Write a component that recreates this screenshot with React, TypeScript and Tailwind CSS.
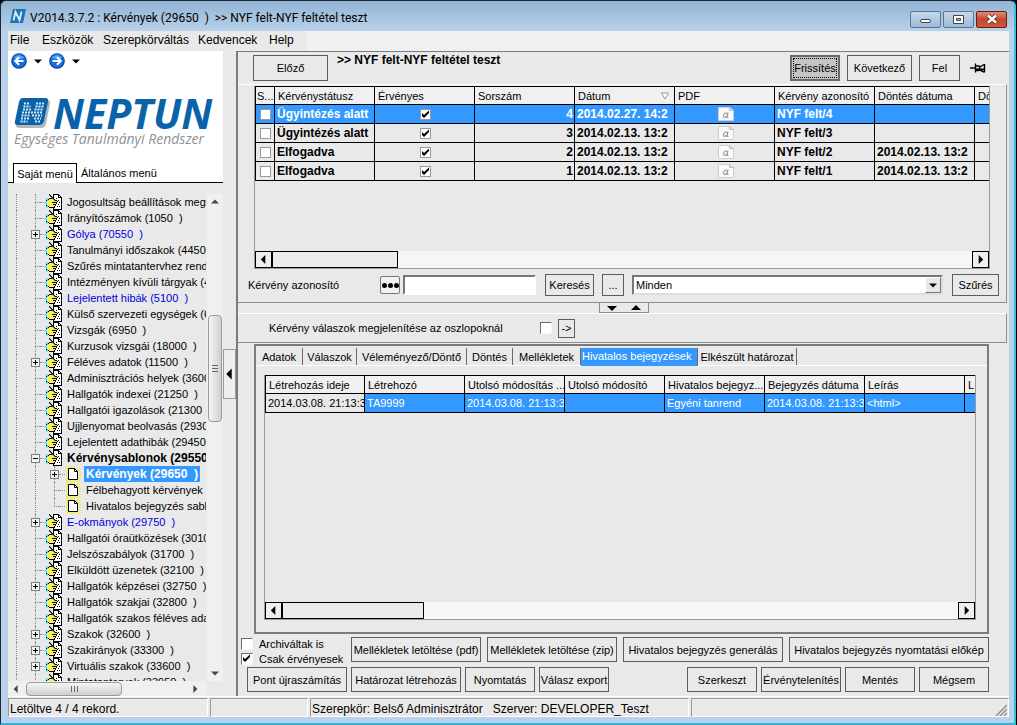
import React from "react";
import clsx from "clsx";

type TreeItem = {
  text: string;
  expand?: "+" | "-";
  link?: boolean;
  bold?: boolean;
  child?: boolean;
  selected?: boolean;
  last?: boolean;
};

const TREE: TreeItem[] = [
  { text: "Jogosultság beállítások megte" },
  { text: "Irányítószámok (1050  )" },
  { text: "Gólya (70550  )", expand: "+", link: true },
  { text: "Tanulmányi időszakok (4450" },
  { text: "Szűrés mintatantervhez rende" },
  { text: "Intézményen kívüli tárgyak (4" },
  { text: "Lejelentett hibák (5100  )", link: true },
  { text: "Külső szervezeti egységek (68" },
  { text: "Vizsgák (6950  )" },
  { text: "Kurzusok vizsgái (18000  )" },
  { text: "Féléves adatok (11500  )", expand: "+" },
  { text: "Adminisztrációs helyek (3600" },
  { text: "Hallgatók indexei (21250  )" },
  { text: "Hallgatói igazolások (21300  )" },
  { text: "Ujjlenyomat beolvasás (29300" },
  { text: "Lejelentett adathibák (29450" },
  { text: "Kérvénysablonok (29550", expand: "-", bold: true },
  { text: "Kérvények (29650  )", expand: "+", bold: true, child: true, selected: true },
  { text: "Félbehagyott kérvények (", child: true },
  { text: "Hivatalos bejegyzés sablo", child: true, last: true },
  { text: "E-okmányok (29750  )", expand: "+", link: true },
  { text: "Hallgatói óraütközések (3010" },
  { text: "Jelszószabályok (31700  )" },
  { text: "Elküldött üzenetek (32100  )" },
  { text: "Hallgatók képzései (32750  )", expand: "+" },
  { text: "Hallgatók szakjai (32800  )" },
  { text: "Hallgatók szakos féléves ada" },
  { text: "Szakok (32600  )", expand: "+" },
  { text: "Szakirányok (33300  )", expand: "+" },
  { text: "Virtuális szakok (33600  )", expand: "+" },
  { text: "Mintatantervek (33950  )" },
];

const REQUESTS = [
  { status: "Ügyintézés alatt", no: 4, date: "2014.02.27. 14:2", id: "NYF felt/4", decided: "" },
  { status: "Ügyintézés alatt", no: 3, date: "2014.02.13. 13:2", id: "NYF felt/3", decided: "" },
  { status: "Elfogadva", no: 2, date: "2014.02.13. 13:2", id: "NYF felt/2", decided: "2014.02.13. 13:2" },
  { status: "Elfogadva", no: 1, date: "2014.02.13. 13:2", id: "NYF felt/1", decided: "2014.02.13. 13:2" },
];

const TABS = [
  { label: "Adatok", width: "w-[47px]" },
  { label: "Válaszok", width: "w-[54px]" },
  { label: "Véleményező/Döntő", width: "w-[110px]" },
  { label: "Döntés", width: "w-[46px]" },
  { label: "Mellékletek", width: "w-[68px]" },
  { label: "Hivatalos bejegyzések", width: "w-[117px]", active: true },
  { label: "Elkészült határozat", width: "w-[99px]" },
];

// one character per pixel, "." is transparent
const HAND = [
  "...k...kkkkkk...",
  "...bk..kwwwwkk..",
  "....bk.kwwwwkwk.",
  ".....bkkwwwwkkkk",
  "c..kkkbkwwkwwwwk",
  "cckyyyybkwwwwwwk",
  "kcyyyyyybkkwkwwk",
  "c.yyyyyyyyykwwwk",
  "c.yyyykkkkkwwkwk",
  "c.yyyyyyyykwwwwk",
  "c.yyyyykkkwwkwwk",
  "kcyyyyyyykwwwwwk",
  "cckyyyyykwwkwkwk",
  "c..kkkkkkwwwwwwk",
  ".......kwwwwwwwk",
  ".......kkkkkkkkk",
];

const HAND_COLORS: Record<string, string> = {
  k: "#000",
  w: "#fff",
  y: "#f6f05a",
  c: "#3fd6d6",
  b: "#8a6a2c",
};

const Btn = ({ className, children }: { className?: string; children: React.ReactNode }) => (
  <button
    className={clsx(
      "shrink-0 overflow-hidden whitespace-nowrap border border-[#5c5c5c] bg-[#e9e9e9] text-center",
      className
    )}
  >
    {children}
  </button>
);

const Check = ({
  checked,
  sunken,
  label,
  id,
}: {
  checked?: boolean;
  sunken?: boolean;
  label?: string;
  id?: string;
}) => (
  <span className="inline-grid shrink-0 align-middle">
    <input
      id={id}
      type="checkbox"
      defaultChecked={checked}
      aria-label={label}
      className={clsx(
        "peer col-start-1 row-start-1 appearance-none border bg-white",
        sunken
          ? "size-3 border-[#f8f8f8] border-l-[#6e6e6e] border-t-[#6e6e6e]"
          : "size-[11px] border-[#9a9a9a]"
      )}
    />
    <svg
      viewBox="0 0 11 11"
      className="pointer-events-none invisible col-start-1 row-start-1 size-[11px] peer-checked:visible"
    >
      <path d="M2 4v3l2 2 5-5V1.500L4 6z" fill="#000" />
    </svg>
  </span>
);

const Arrow = ({ dir }: { dir: "left" | "right" | "up" | "down" }) => {
  const d = {
    left: "M7 0v10L2 5z",
    right: "M3 0v10l5-5z",
    up: "M0 7h10L5 2z",
    down: "M0 3h10L5 8z",
  }[dir];
  return (
    <svg viewBox="0 0 10 10" className="size-full">
      <path d={d} fill="#000" />
    </svg>
  );
};

const HandIcon = () => (
  <svg viewBox="0 0 16 16" className="h-4 w-4 shrink-0" shapeRendering="crispEdges">
    {HAND.map((line, y) =>
      line.split("").map((c, x) =>
        c === "." ? null : (
          <rect key={x + "-" + y} x={x} y={y} width="1" height="1" fill={HAND_COLORS[c]} />
        )
      )
    )}
  </svg>
);

const PageIcon = () => (
  <svg viewBox="0 0 16 16" className="h-4 w-4 shrink-0">
    <path
      d="M2 1h8l5 4v10H2z"
      fill="none"
      stroke="#f0ee60"
      strokeWidth="2"
      strokeDasharray="2 1"
    />
    <path d="M3.500 2.500h6l3 3v8h-9z" fill="#fff" stroke="#000" />
    <path d="M9.500 2.500v3h3" fill="none" stroke="#000" />
  </svg>
);

const Expander = ({ sign }: { sign?: "+" | "-" }) =>
  sign ? (
    <svg viewBox="0 0 9 9" className="z-10 size-[9px] shrink-0" shapeRendering="crispEdges">
      <rect x="0.500" y="0.500" width="8" height="8" fill="#f4f4f4" stroke="#808080" />
      <path d={sign === "+" ? "M2 4.500h5M4.500 2v5" : "M2 4.500h5"} stroke="#000" />
    </svg>
  ) : (
    <span className="ml-1 h-px w-[5px] shrink-0 border-t border-dotted border-[#8c8c8c]" />
  );

const TreeRow = ({ item }: { item: TreeItem }) => (
  <li className="flex h-4 items-center whitespace-pre">
    <span className="ml-2 h-4 w-px shrink-0 border-l border-dotted border-[#8c8c8c]" />
    <span className="flex h-4 w-[29px] shrink-0 items-center pl-[14px]">
      {item.child ? (
        <span className="ml-1 h-4 w-px border-l border-dotted border-[#8c8c8c]" />
      ) : (
        <>
          <span className="grid h-4 w-[9px] shrink-0 place-items-center">
            <span className="col-start-1 row-start-1 h-4 w-px border-l border-dotted border-[#8c8c8c]" />
            <span className="col-start-1 row-start-1 flex w-[9px]">
              <Expander sign={item.expand} />
            </span>
          </span>
          <span className="h-px w-[6px] border-t border-dotted border-[#8c8c8c]" />
        </>
      )}
    </span>
    {item.child ? (
      <>
        <span className="ml-1 grid h-4 w-[9px] shrink-0 place-items-center">
          <span
            className={clsx(
              "col-start-1 row-start-1 w-px self-start border-l border-dotted border-[#8c8c8c]",
              item.last ? "h-2" : "h-4"
            )}
          />
          <span className="col-start-1 row-start-1 flex w-[9px]">
            <Expander sign={item.expand} />
          </span>
        </span>
        <span className="h-px w-[6px] shrink-0 border-t border-dotted border-[#8c8c8c]" />
        <PageIcon />
        <a
          href="#"
          className={clsx(
            "ml-[3px] px-0.5 leading-4",
            item.selected && "bg-[#3399ff] text-xs leading-4 font-bold text-white"
          )}
        >
          {item.text}
        </a>
      </>
    ) : (
      <>
        <HandIcon />
        <a
          href="#"
          className={clsx(
            "ml-[5px] leading-4",
            item.link && "text-[#0000e0]",
            item.bold && "text-xs leading-4 font-bold"
          )}
        >
          {item.text}
        </a>
      </>
    )}
  </li>
);

const GridScroll = ({ thumb }: { thumb: string }) => (
  <div className="mt-auto flex h-[17px] shrink-0 bg-[#f6f6f6]">
    <button aria-label="Balra" className="w-[17px] border border-black bg-[#eee] p-[3px]">
      <Arrow dir="left" />
    </button>
    <div className={clsx("border border-black bg-[#ebebeb]", thumb)} />
    <button aria-label="Jobbra" className="ml-auto w-[17px] border border-black bg-[#eee] p-[3px]">
      <Arrow dir="right" />
    </button>
  </div>
);

const NavIcon = ({ flip }: { flip?: boolean }) => (
  <svg viewBox="0 0 16 16" className={clsx("size-4", flip && "-scale-x-100")}>
    <circle cx="8" cy="8" r="7.800" fill="#0d3f9c" />
    <circle cx="8" cy="7.600" r="6.800" fill="#1670dc" />
    <path d="M3 5a6 6 0 0 1 10 0q-5 2-10 0" fill="#5aa5f0" />
    <path d="M12.500 8h-8M8 4.200 4.200 8 8 11.800" fill="none" stroke="#fff" strokeWidth="2" />
  </svg>
);

const PdfIcon = () => (
  <svg viewBox="0 0 16 14" className="mx-auto h-[14px] w-4">
    <path d="M.5.500h11l4 3v10H.5z" fill="#fafafa" stroke="#cfcfcf" />
    <path d="M11.500.500v3h4" fill="#ddd" stroke="#bbb" />
    <path
      d="M10 5.500 9 10.500h1.500M9.500 7q-1-1.800-3-.3-1.800 1.800-.8 3.300 1.600 1.200 3.300-1.500"
      fill="none"
      stroke="#9a9a9a"
      strokeWidth="1.200"
    />
  </svg>
);

const LogoMark = () => (
  <svg viewBox="0 0 38 32" className="h-8 w-[38px] shrink-0">
    <path d="M9 3h24q4 0 3 4l-4 20q-1 4-5 4H6q-5 0-4-4L6 7q1-4 3-4" fill="#b5b8bb" />
    <path d="M9 1h22q4 0 3 4l-4 19q-1 4-5 4H4q-4 0-3-4L5 5q1-4 4-4" fill="#0a63a9" />
    <path
      d="M10 6.500h5M22 6.500h9M9.500 9.500h7M21.500 9.500h9M9 12.500h9M20.500 12.500h9M8 15.500h21M7.500 18.500h9M18 18.500h10M7 21.500h8M20 21.500h7M6.500 24.500h7M21 24.500h5"
      stroke="#d6ebf8"
      strokeWidth="2"
      strokeDasharray="2 1"
    />
  </svg>
);

const Sidebar = () => (
  <aside className="flex w-[215px] shrink-0 flex-col">
    <div className="flex h-[132px] flex-col bg-white">
      <div className="flex h-5 items-center gap-[7px] pl-[3px]">
        <button aria-label="Vissza">
          <NavIcon />
        </button>
        <button aria-label="Vissza lista" className="size-2">
          <Arrow dir="down" />
        </button>
        <button aria-label="Előre">
          <NavIcon flip />
        </button>
        <button aria-label="Előre lista" className="size-2">
          <Arrow dir="down" />
        </button>
      </div>
      <div className="mt-[26px] flex h-8 items-center pl-[6px] font-['Open_Sans',sans-serif]">
        <LogoMark />
        <span className="pl-px text-[41px] font-bold italic leading-8 text-[#0a63a9]">NEPTUN</span>
      </div>
      <p className="whitespace-nowrap pl-[6px] pt-0.5 font-['Open_Sans',sans-serif] text-sm italic leading-4 text-[#8f9296]">
        Egységes Tanulmányi Rendszer
      </p>
      <div className="mt-auto flex h-5 items-end">
        <span className="w-[5px] self-stretch border-b border-black" />
        <button className="h-5 w-16 border border-b-0 border-black bg-white">Saját menü</button>
        <button className="h-5 grow border-b border-black pl-1 text-left">Általános menü</button>
      </div>
    </div>
    <div className="flex min-h-0 flex-1 basis-0 pt-[11px]">
      <ul className="w-[198px] overflow-hidden">
        {TREE.map((item) => (
          <TreeRow key={item.text} item={item} />
        ))}
      </ul>
      <div className="ml-px flex w-4 flex-col items-center bg-[#f0f0f0] py-1">
        <button aria-label="Fel görget" className="size-2 opacity-70">
          <Arrow dir="up" />
        </button>
        <div className="mt-[109px] flex h-[107px] w-[14px] flex-col items-center justify-center gap-px rounded-sm border border-[#9a9a9a] bg-linear-to-r from-[#f6f6f6] to-[#cfcfcf]">
          <span className="h-px w-[6px] bg-[#666]" />
          <span className="mt-px h-px w-[6px] bg-[#666]" />
          <span className="mt-px h-px w-[6px] bg-[#666]" />
        </div>
        <button aria-label="Le görget" className="mt-auto size-2 opacity-70">
          <Arrow dir="down" />
        </button>
      </div>
    </div>
    <div className="flex h-[15px] w-[199px] shrink-0 items-center bg-[#f0f0f0] px-1">
      <button aria-label="Balra görget" className="size-2 opacity-70">
        <Arrow dir="left" />
      </button>
      <div className="ml-[6px] flex h-[14px] w-24 items-center justify-center gap-0.5 rounded-sm border border-[#9a9a9a] bg-linear-to-b from-[#f6f6f6] to-[#cfcfcf]">
        <span className="h-[6px] w-px bg-[#666]" />
        <span className="h-[6px] w-px bg-[#666]" />
        <span className="h-[6px] w-px bg-[#666]" />
      </div>
      <button aria-label="Jobbra görget" className="ml-auto mr-1 size-2 opacity-70">
        <Arrow dir="right" />
      </button>
    </div>
  </aside>
);

const head = "h-[18px] overflow-hidden border-b border-r border-black bg-[#f0f0f0] pl-[3px] text-left font-normal";
const cell = "h-[19px] overflow-hidden border-b border-r border-black pl-0.5";

const RequestGrid = () => (
  <div className="mr-4 flex h-[183px] flex-col overflow-hidden border-b border-l border-r border-[#9a9a9a]">
    <table className="w-[820px] shrink-0 table-fixed border-separate border-spacing-0 border-l border-t border-black leading-4 whitespace-nowrap">
      <colgroup>
        <col className="w-[19px]" />
        {[1, 2, 3, 4, 5, 6, 7, 8].map((n) => (
          <col key={n} className="w-[100px]" />
        ))}
      </colgroup>
      <thead>
        <tr>
          <th className={clsx(head, "pl-px")}>S...</th>
          <th className={head}>Kérvénystátusz</th>
          <th className={head}>Érvényes</th>
          <th className={head}>Sorszám</th>
          <th className={head}>
            <span className="flex items-center justify-between pr-[5px]">
              Dátum
              <svg viewBox="0 0 8 8" className="size-2">
                <path d="M.5 1h7L4 7z" fill="#fff" stroke="#999" />
              </svg>
            </span>
          </th>
          <th className={head}>PDF</th>
          <th className={head}>Kérvény azonosító</th>
          <th className={head}>Döntés dátuma</th>
          <th className={head}>Dö</th>
        </tr>
      </thead>
      <tbody className="text-xs leading-4 font-bold">
        {REQUESTS.map((r, i) => (
          <tr key={r.no} className={i === 0 ? "bg-[#3399ff] text-white" : ""}>
            <td className="h-[19px] border-b border-r border-black text-center leading-none">
              <Check label={"Kijelöl " + r.no} />
            </td>
            <td className={cell}>{r.status}</td>
            <td className={clsx(cell, "text-center leading-none")}>
              <Check checked label={"Érvényes " + r.no} />
            </td>
            <td className={clsx(cell, "pr-px text-right")}>{r.no}</td>
            <td className={cell}>{r.date}</td>
            <td className={cell}>
              <PdfIcon />
            </td>
            <td className={cell}>{r.id}</td>
            <td className={cell}>{r.decided}</td>
            <td className={cell} />
          </tr>
        ))}
      </tbody>
    </table>
    <GridScroll thumb="w-[126px]" />
  </div>
);

const EntryGrid = () => (
  <div className="mt-[9px] mr-[11px] mb-3 ml-2 flex min-h-0 flex-1 flex-col overflow-hidden border-b border-l border-r border-[#9a9a9a]">
    <table className="w-[800px] shrink-0 table-fixed border-separate border-spacing-0 border-l border-t border-black leading-4 whitespace-nowrap">
      <thead>
        <tr>
          <th className={clsx(head, "w-[99px]")}>Létrehozás ideje</th>
          <th className={clsx(head, "w-[100px]")}>Létrehozó</th>
          <th className={clsx(head, "w-[100px]")}>Utolsó módosítás ...</th>
          <th className={clsx(head, "w-[100px]")}>Utolsó módosító</th>
          <th className={clsx(head, "w-[100px]")}>Hivatalos bejegyz...</th>
          <th className={clsx(head, "w-[100px]")}>Bejegyzés dátuma</th>
          <th className={clsx(head, "w-[100px]")}>Leírás</th>
          <th className={clsx(head, "w-[100px]")}>L</th>
        </tr>
      </thead>
      <tbody>
        <tr className="bg-[#3399ff] text-white">
          <td className={clsx(cell, "bg-[#e9e9e9] text-black")}>2014.03.08. 21:13:3</td>
          <td className={cell}>TA9999</td>
          <td className={cell}>2014.03.08. 21:13:3</td>
          <td className={cell} />
          <td className={cell}>Egyéni tanrend</td>
          <td className={cell}>2014.03.08. 21:13:3</td>
          <td className={cell}>&lt;html&gt;</td>
          <td className={cell} />
        </tr>
      </tbody>
    </table>
    <GridScroll thumb="w-[142px]" />
  </div>
);

const MainPanel = () => (
  <main className="flex min-w-0 flex-1 flex-col border-l-2 border-t border-[#7b7b7b]">
    <div className="flex h-8 shrink-0 pr-[29px] pt-[3px]">
      <Btn className="ml-[15px] h-[26px] w-[75px]">Előző</Btn>
      <b className="ml-[9px] text-xs leading-[10px]">&gt;&gt; NYF felt-NYF feltétel teszt</b>
      <div className="ml-auto flex items-start gap-[7px]">
        <button className="h-[26px] w-[50px] border-2 border-[#6a6a6a] bg-[#c4c4c4] p-px">
          <span className="block border border-dotted border-black leading-[18px]">Frissítés</span>
        </button>
        <Btn className="h-[26px] w-[65px]">Következő</Btn>
        <Btn className="h-[26px] w-[41px]">Fel</Btn>
      </div>
      <button aria-label="Rögzít" className="ml-2 mr-[-8px] flex h-[26px] w-5 items-center justify-center">
        <svg viewBox="0 0 16 12" className="h-3 w-4">
          <path
            d="M0 6h5M5.500 1.500v9M6 4h3M6 8.500h3M9.500 3.500v5.500M14.500 2v8.500M10 5l4-2.500M10 8l4 2"
            fill="none"
            stroke="#000"
            strokeWidth="1.400"
          />
          <path d="M6 6.500h8v1.500H6z" fill="#000" />
        </svg>
      </button>
    </div>

    <section className="mr-0.5 shrink-0 border-b border-r border-t border-b-[#8c8c8c] border-r-[#8c8c8c] border-t-white pl-4 pt-px">
      <RequestGrid />
      <div className="mt-[5px] mr-[7px] mb-[6px] flex h-[22px] items-center">
        <label htmlFor="azonosito" className="ml-[-6px] w-[132px]">
          Kérvény azonosító
        </label>
        <button
          aria-label="Választás"
          className="flex h-[18px] w-5 items-center justify-center gap-px rounded-xs border border-[#777] bg-[#f2f2f2]"
        >
          <span className="size-[5px] rounded-full bg-black" />
          <span className="size-[5px] rounded-full bg-black" />
          <span className="size-[5px] rounded-full bg-black" />
        </button>
        <input
          id="azonosito"
          type="text"
          className="ml-[3px] h-5 w-[133px] border-2 border-white border-l-[#777] border-t-[#777] bg-white px-1"
        />
        <Btn className="ml-[9px] h-[22px] w-[49px]">Keresés</Btn>
        <Btn className="ml-2 h-[22px] w-[22px]">...</Btn>
        <div className="relative ml-2 h-5 flex-1">
          <select
            aria-label="Szűrő"
            className="h-5 w-full appearance-none border-2 border-[#ddd] border-l-[#777] border-t-[#777] bg-white px-0.5"
          >
            <option>Minden</option>
          </select>
          <span className="pointer-events-none absolute right-0.5 top-0.5 flex h-4 w-4 items-center border border-white border-b-[#777] border-r-[#777] bg-[#e9e9e9] p-[3px]">
            <Arrow dir="down" />
          </span>
        </div>
        <Btn className="ml-[9px] h-[22px] w-[47px]">Szűrés</Btn>
      </div>
    </section>

    <div className="flex h-[10px] shrink-0 justify-center">
      <div className="flex w-[50px] items-center justify-between border border-t-0 border-[#8c8c8c] px-[6px]">
        <button aria-label="Le" className="h-[10px] w-3">
          <Arrow dir="down" />
        </button>
        <button aria-label="Fel" className="h-[10px] w-3">
          <Arrow dir="up" />
        </button>
      </div>
    </div>

    <section className="mr-0.5 flex h-[30px] shrink-0 items-center border-b border-r border-t border-b-[#8c8c8c] border-r-[#8c8c8c] border-t-white pl-[31px]">
      <label htmlFor="valaszok" className="w-[271px]">
        Kérvény válaszok megjelenítése az oszlopoknál
      </label>
      <Check sunken id="valaszok" />
      <Btn className="ml-[6px] h-[19px] w-[17px] leading-none">-&gt;</Btn>
    </section>

    <section className="ml-4 mr-[20px] mt-px flex min-h-0 flex-1 flex-col border-2 border-[#7b7b7b]">
      <div className="mt-0.5 flex h-[18px] shrink-0 whitespace-nowrap border-b border-white">
        {TABS.map((t) => (
          <button
            key={t.label}
            className={clsx(
              "shrink-0 border-r border-[#6a6a6a]",
              t.width,
              t.active && "h-[18px] bg-[#3399ff] pb-0.5 pl-px text-left text-white"
            )}
          >
            {t.label}
          </button>
        ))}
      </div>
      <EntryGrid />
    </section>

    <div className="mr-[20px] mt-[3px] flex shrink-0 items-start gap-[6px] pl-[3px]">
      <div className="flex w-[104px] shrink-0 flex-col gap-[3px] whitespace-nowrap pt-px leading-3">
        <label className="flex items-center gap-[6px]">
          <Check sunken />
          Archiváltak is
        </label>
        <label className="flex items-center gap-[6px]">
          <Check sunken checked />
          Csak érvényesek
        </label>
      </div>
      <Btn className="h-[25px] w-[130px]">Mellékletek letöltése (pdf)</Btn>
      <Btn className="h-[25px] w-[130px]">Mellékletek letöltése (zip)</Btn>
      <Btn className="h-[25px] w-[160px]">Hivatalos bejegyzés generálás</Btn>
      <Btn className="ml-auto h-[25px] w-[200px]">Hivatalos bejegyzés nyomtatási előkép</Btn>
    </div>
    <div className="mb-[4px] mr-[20px] mt-0.5 flex shrink-0 gap-1 pl-[9px]">
      <Btn className="h-[25px] w-[100px]">Pont újraszámítás</Btn>
      <Btn className="h-[25px] w-[110px]">Határozat létrehozás</Btn>
      <Btn className="h-[25px] w-[70px]">Nyomtatás</Btn>
      <Btn className="h-[25px] w-[70px]">Válasz export</Btn>
      <Btn className="ml-auto h-[25px] w-[70px]">Szerkeszt</Btn>
      <Btn className="h-[25px] w-[80px]">Érvénytelenítés</Btn>
      <Btn className="h-[25px] w-[70px]">Mentés</Btn>
      <Btn className="h-[25px] w-[70px]">Mégsem</Btn>
    </div>
  </main>
);

const TitleBar = () => (
  <header className="flex h-[30px] shrink-0 items-center pl-0.5">
    <svg viewBox="0 0 16 14" className="h-[14px] w-4">
      <path d="M3 0h13l-3 14H0z" fill="#1d74b8" />
      <path d="M3.500 11.500 5.500 3 9.500 11l2-8.500" fill="none" stroke="#d9f0fb" strokeWidth="1.800" />
    </svg>
    <h1 className="ml-1 whitespace-pre pt-1 font-['Roboto',sans-serif] text-xs">
      {"V2014.3.7.2 : Kérvények (29650  )  >> NYF felt-NYF feltétel teszt"}
    </h1>
    <div className="ml-auto mr-0.5 flex gap-0.5 pt-[6px]">
      <button
        aria-label="Kis méret"
        className="flex h-[17px] w-[31px] items-center justify-center rounded-xs border border-[#5d7793] bg-linear-to-b from-[#c5d8ec] to-[#9dbad8]"
      >
        <span className="mt-1 h-1 w-[11px] rounded-xs border border-[#444] bg-white" />
      </button>
      <button
        aria-label="Teljes méret"
        className="flex h-[17px] w-[31px] items-center justify-center rounded-xs border border-[#5d7793] bg-linear-to-b from-[#c5d8ec] to-[#9dbad8]"
      >
        <svg viewBox="0 0 11 9" className="h-[9px] w-[11px]">
          <path d="M.5.500h10v8H.5z" fill="#fff" stroke="#444" />
          <path d="M3.500 3.500h4v2h-4z" fill="#9dbad8" stroke="#444" />
        </svg>
      </button>
      <button
        aria-label="Bezárás"
        className="flex h-[17px] w-[31px] items-center justify-center rounded-xs border border-[#6b1d14] bg-linear-to-b from-[#e08a78] via-[#c8452f] to-[#c85a40]"
      >
        <svg viewBox="0 0 12 10" className="h-[10px] w-3">
          <path d="m2 1.500 8 7M10 1.500l-8 7" stroke="#5a3030" strokeWidth="4" />
          <path d="m2 1.500 8 7M10 1.500l-8 7" stroke="#fff" strokeWidth="2.400" />
        </svg>
      </button>
    </div>
  </header>
);

const statusCell = "border border-white border-l-[#9a9a9a] border-t-[#9a9a9a] px-px pt-0.5";

const App = () => {
  return (
    <div className="h-screen bg-black pr-px font-['Liberation_Sans',Arial,sans-serif] text-[11px] leading-[14px] text-black">
      <div className="flex h-full flex-col overflow-hidden rounded-t-md border border-b-2 border-r-2 border-[#1d2b38] border-b-[#2cb6d8] border-r-[#35bfe0] bg-[#b9d1ea] bg-linear-to-b from-[#93b3d3] to-[#b9d1ea] to-[30px] pr-[5px] pb-[6px] pl-[7px]">
        <TitleBar />
        <div className="flex min-h-0 flex-1 flex-col bg-[#e9e9e9]">
          <nav className="flex h-5 shrink-0 items-center text-xs leading-[14px]">
            <a href="#" className="ml-0.5 w-8 pb-0.5">File</a>
            <a href="#" className="w-[61px] pb-0.5">Eszközök</a>
            <a href="#" className="w-[95px] pb-0.5">Szerepkörváltás</a>
            <a href="#" className="w-[71px] pb-0.5">Kedvencek</a>
            <a href="#" className="w-[37px] pb-0.5">Help</a>
            <span className="h-5 flex-1 bg-[#f0f0f0]" />
          </nav>
          <div className="flex min-h-0 flex-1">
            <Sidebar />
            <div className="flex w-[13px] shrink-0 flex-col">
              <button
                aria-label="Menü elrejtése"
                className="mt-[298px] flex h-[50px] w-[13px] items-center border border-[#9a9a9a] bg-[#efefef]"
              >
                <Arrow dir="left" />
              </button>
            </div>
            <MainPanel />
          </div>
          <footer className="flex h-[21px] shrink-0 gap-0.5 border-t border-white pt-px text-xs leading-[17px] whitespace-pre">
            <div className={clsx(statusCell, "w-[200px]")}>Letöltve 4 / 4 rekord.</div>
            <div className={clsx(statusCell, "w-[98px]")} />
            <div className={clsx(statusCell, "w-[379px]")}>
              {"Szerepkör: Belső Adminisztrátor   Szerver: DEVELOPER_Teszt"}
            </div>
            <div className={clsx(statusCell, "flex flex-1 items-end justify-end")}>
              <svg viewBox="0 0 12 12" className="size-3">
                <path d="M1 12 12 1M5 12l7-7M9 12l3-3" stroke="#909090" strokeWidth="1.500" />
              </svg>
            </div>
          </footer>
        </div>
      </div>
    </div>
  );
};

export default App;
